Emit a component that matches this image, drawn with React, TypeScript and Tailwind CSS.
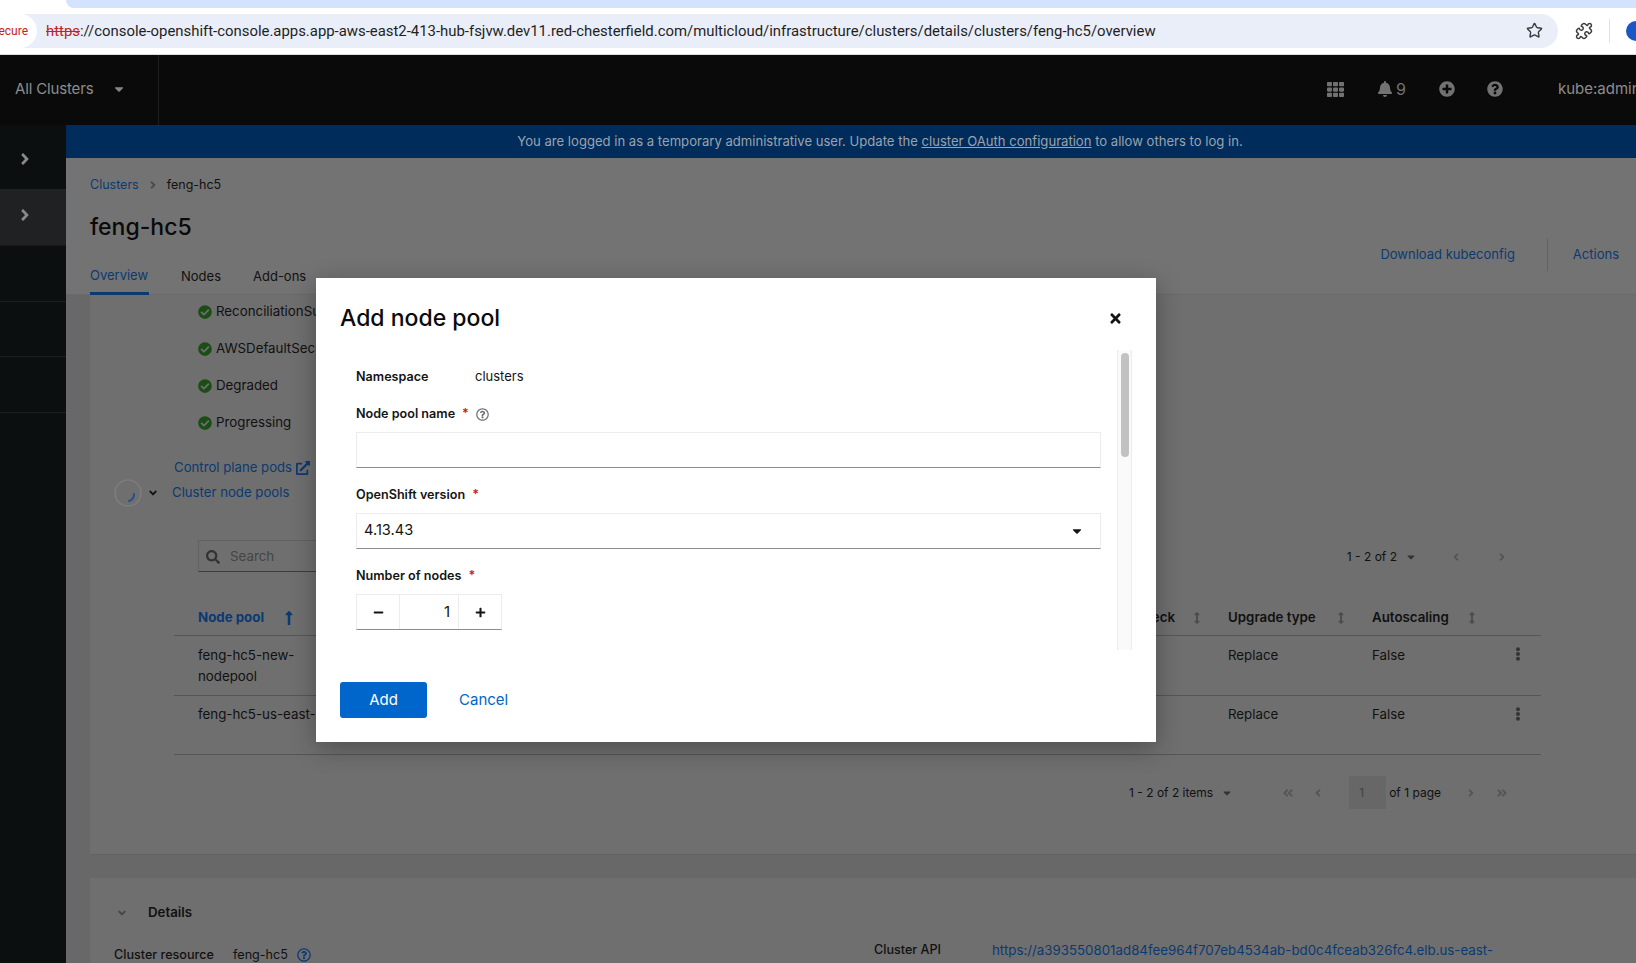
import { Puzzle, Star } from "lucide-react";
import {
  FaAngleDoubleLeft,
  FaAngleDoubleRight,
  FaAngleDown,
  FaAngleLeft,
  FaAngleRight,
  FaArrowsAltV,
  FaBell,
  FaCaretDown,
  FaCheckCircle,
  FaEllipsisV,
  FaExternalLinkAlt,
  FaLongArrowAltUp,
  FaMinus,
  FaPlus,
  FaPlusCircle,
  FaQuestionCircle,
  FaRegQuestionCircle,
  FaSearch,
  FaTh,
  FaTimes,
} from "react-icons/fa";

const url =
  "://console-openshift-console.apps.app-aws-east2-413-hub-fsjvw.dev11.red-chesterfield.com/multicloud/infrastructure/clusters/details/clusters/feng-hc5/overview";

function BrowserBar() {
  return (
    <div className="h-[55px] shrink-0 bg-white border-b border-[#dcdcdc]">
      <div className="h-2 ml-[66px] bg-[#d3e3fd] rounded-bl-xl" />
      <div className="mt-1.5 flex items-center">
        <div className="flex-none w-[1558px] h-[34px] bg-[#eaeef8] rounded-r-full flex items-center overflow-hidden">
          <div className="w-[37px] h-full bg-white rounded-r-full flex items-center justify-end pr-[9px] overflow-hidden text-xs text-[#c5221f] font-['Roboto',sans-serif]">
            ecure
          </div>
          <div className="ml-[9px] flex-1 flex items-center justify-between pr-[15px] font-['Roboto',sans-serif] text-[14.9px] text-[#1f1f1f]">
            <span>
              <span className="line-through text-[#c5221f]">https</span>
              {url}
            </span>
            <Star className="size-[17px] text-[#3c3c3c]" strokeWidth={2} />
          </div>
        </div>
        <Puzzle className="ml-[17px] size-[18px] shrink-0 text-[#3c3c3c]" strokeWidth={2} />
        <div className="ml-[16px] w-px h-6 shrink-0 bg-[#d3e3fd]" />
        <div className="ml-[16px] size-5 shrink-0 rounded-full bg-[#1a56c4]" />
      </div>
    </div>
  );
}

function TopNav() {
  return (
    <div className="h-[70px] shrink-0 bg-[#0a0a0a] flex items-center text-[#8d8d8d] pb-[2px]">
      <div className="w-[159px] h-[70px] -mb-[2px] border-r border-[#1d1d1d] flex items-center pl-[15px] pb-[2px]">
        <span className="text-[15px] tracking-[-0.01em]">All Clusters</span>
        <FaCaretDown className="ml-[19px] size-[14px] text-[#858585]" />
      </div>
      <div className="flex-1 flex items-center justify-end min-w-0">
        <FaTh className="size-[17px] text-[#727272] mr-[33px]" />
        <FaBell className="size-4 text-[#727272]" />
        <span className="ml-[3px] text-base text-[#727272]">9</span>
        <FaPlusCircle className="ml-[33px] size-4 text-[#727272]" />
        <FaQuestionCircle className="ml-8 size-4 text-[#727272]" />
        <span className="ml-[55px] text-[15px] whitespace-nowrap w-[79px] overflow-hidden -mr-px">
          kube:admin
        </span>
      </div>
    </div>
  );
}

function SideRail() {
  return (
    <div className="w-[66px] shrink-0 bg-[#0c0f0f] text-[#8a8a8a]">
      <div className="h-[64px] flex items-center pl-[16px] pt-[3px]">
        <FaAngleRight className="size-[18px]" />
      </div>
      <div className="h-[57px] bg-[#1f2123] flex items-center pl-[16px] pb-[4px] border-b border-[#191b1c]">
        <FaAngleRight className="size-[18px]" />
      </div>
      <div className="h-[56px] border-b border-[#1c1f20]" />
      <div className="h-[55px] border-b border-[#1c1f20]" />
      <div className="h-[56px] border-b border-[#1c1f20]" />
    </div>
  );
}

function PageHead() {
  return (
    <div className="h-[137px] shrink-0 bg-[#737373] border-b border-[#6a6a6a] flex justify-between pl-6 pr-[17px]">
      <div>
        <div className="pt-[17px] flex items-center text-[12.5px] leading-5">
          <span className="text-[#0b3a70]">Clusters</span>
          <FaAngleRight className="mx-[8px] size-3 text-[#4a4a4a]" />
          <span className="text-[#111]">feng-hc5</span>
        </div>
        <h1 className="mt-4 text-[23px] leading-8 font-medium text-[#0a0a0a]">feng-hc5</h1>
        <div className="mt-[15px] flex text-[13px] text-[#111]">
          <span className="h-[37px] w-[59px] flex items-center pt-[2px] border-b-[3px] border-[#0b3a70] text-[#0b3a70] whitespace-nowrap">
            Overview
          </span>
          <span className="ml-8 h-[37px] flex items-center">Nodes</span>
          <span className="ml-8 h-[37px] flex items-center">Add-ons</span>
        </div>
      </div>
      <div className="mt-20 h-[33px] flex items-center text-[13px] text-[#0b3a70]">
        <span>Download kubeconfig</span>
        <div className="ml-8 mr-[25px] w-px h-[33px] bg-[#636363]" />
        <span>Actions</span>
      </div>
    </div>
  );
}

function StatusRow({ label }: { label: string }) {
  return (
    <div className="h-5 flex items-center text-[13.3px] text-[#111]">
      <FaCheckCircle className="size-[14px] text-[#1d4d17]" />
      <span className="ml-[4px] whitespace-nowrap">{label}</span>
    </div>
  );
}

function SortIcon() {
  return <FaArrowsAltV className="size-3 text-[#4c4c4c]" />;
}

function NodePoolTable() {
  return (
    <div className="mt-[26px] ml-[84px] w-[1367px] text-[13.3px] text-[#111]">
      <div className="h-[38px] grid grid-cols-[1054px_144px_1fr] items-center pt-[2px] border-b border-[#555] font-semibold">
        <div className="flex items-center pl-6 pr-[25px]">
          <span className="text-[#0b3a70] font-bold">Node pool</span>
          <FaLongArrowAltUp className="ml-[17px] size-4 text-[#0b3a70]" />
          <span className="ml-auto">Health check</span>
          <span className="ml-4">
            <SortIcon />
          </span>
        </div>
        <div className="flex items-center">
          <span>Upgrade type</span>
          <span className="ml-[19px]">
            <SortIcon />
          </span>
        </div>
        <div className="flex items-center">
          <span>Autoscaling</span>
          <span className="ml-[17px]">
            <SortIcon />
          </span>
        </div>
      </div>
      <div className="h-[60px] grid grid-cols-[1054px_144px_1fr] border-b border-[#555] pt-[9px] leading-[21px]">
        <div className="pl-6 w-[130px] box-content">feng-hc5-new-nodepool</div>
        <div>Replace</div>
        <div className="flex justify-between pr-4">
          <span>False</span>
          <FaEllipsisV className="size-[14px] mt-[2px] text-[#333]" />
        </div>
      </div>
      <div className="h-[59px] grid grid-cols-[1054px_144px_1fr] border-b border-[#555] pt-2 leading-[21px]">
        <div className="pl-6 whitespace-nowrap">feng-hc5-us-east-1a</div>
        <div>Replace</div>
        <div className="flex justify-between pr-4">
          <span>False</span>
          <FaEllipsisV className="size-[14px] mt-[3px] text-[#333]" />
        </div>
      </div>
    </div>
  );
}

function PoolsCard() {
  return (
    <div className="h-[560px] ml-6 bg-[#6f6f6f] border-b border-[#636363]">
      <div className="pt-[7px] pl-[108px] flex flex-col gap-[17px]">
        <StatusRow label="ReconciliationSucceeded" />
        <StatusRow label="AWSDefaultSecurityGroupCreated" />
        <StatusRow label="Degraded" />
        <StatusRow label="Progressing" />
      </div>
      <div className="mt-[25px] pl-[84px] h-5 flex items-center text-[13.2px] text-[#0b3a70]">
        <span>Control plane pods</span>
        <FaExternalLinkAlt className="ml-[4px] size-[14px]" />
      </div>
      <div className="mt-px pl-6 flex items-center text-[13.2px]">
        <svg viewBox="0 0 28 28" className="size-7 shrink-0">
          <circle cx="14" cy="14" r="13" fill="none" stroke="#7d7d7d" strokeWidth="1.5" />
          <path d="M20 15 C20 19 18 21 15 22" fill="none" stroke="#27508a" strokeWidth="2" strokeLinecap="round" />
        </svg>
        <FaAngleDown className="ml-[5px] size-3 text-[#111]" />
        <span className="ml-[13px] text-[#0b3a70]">Cluster node pools</span>
      </div>
      <div className="mt-[33px] ml-[108px] mr-[128px] flex items-center justify-between">
        <div className="w-[200px] h-8 flex items-center border border-[#626262] border-b-[#3c3c3c] pl-[7px] pt-[2px] text-[13.3px] text-[#454545]">
          <FaSearch className="size-[14px] text-[#333]" />
          <span className="ml-[10px]">Search</span>
        </div>
        <div className="flex items-center text-xs pt-[2px] text-[#111]">
          <span>1 - 2 of 2</span>
          <FaCaretDown className="ml-2 size-3 text-[#333]" />
          <FaAngleLeft className="ml-[33px] size-3 text-[#555]" />
          <FaAngleRight className="ml-[34px] size-3 text-[#555]" />
        </div>
      </div>
      <NodePoolTable />
      <div className="mt-[21px] mr-[128px] flex items-center justify-end text-xs text-[#111]">
        <span>1 - 2 of 2 items</span>
        <FaCaretDown className="ml-2 size-3 text-[#333]" />
        <FaAngleDoubleLeft className="ml-[49px] size-3 text-[#555]" />
        <FaAngleLeft className="ml-[18px] size-3 text-[#555]" />
        <div className="ml-[25px] w-[37px] h-[33px] bg-[#676767] flex items-center pl-[10px] text-[#444]">1</div>
        <span className="ml-[3px]">of 1 page</span>
        <FaAngleRight className="ml-[24px] size-3 text-[#555]" />
        <FaAngleDoubleRight className="ml-[19px] size-3 text-[#555]" />
      </div>
    </div>
  );
}

function DetailsCard() {
  return (
    <div className="mt-[23px] ml-6 bg-[#6f6f6f] pt-[25px] pl-6 text-[#111]">
      <div className="h-5 flex items-center text-[13.3px] font-semibold pl-[2px]">
        <FaAngleDown className="size-3 text-[#444]" />
        <span className="ml-[20px]">Details</span>
      </div>
      <div className="mt-[17px] flex text-[12.6px] leading-5">
        <div className="w-[760px] pt-[5px] flex items-start">
          <span className="w-[119px] font-medium">Cluster resource</span>
          <span>feng-hc5</span>
          <FaRegQuestionCircle className="ml-[9px] mt-[3px] size-[14px] text-[#0b3a70]" />
        </div>
        <div className="w-[118px] font-medium">Cluster API address</div>
        <div className="text-[13.3px] text-[#0b3a70] whitespace-nowrap">
          https://a393550801ad84fee964f707eb4534ab-bd0c4fceab326fc4.elb.us-east-
        </div>
      </div>
    </div>
  );
}

function FieldLabel({ text, star }: { text: string; star?: boolean }) {
  return (
    <div className="h-5 flex items-center text-[12.6px] font-semibold text-[#151515]">
      <span>{text}</span>
      {star && <span className="ml-[7px] text-[#c9190b]">*</span>}
    </div>
  );
}

function AddNodePoolModal() {
  return (
    <div className="absolute left-[316px] top-[278px] w-[840px] h-[464px] bg-white shadow-[0_6px_24px_rgba(0,0,0,0.3)] flex flex-col">
      <div className="h-[72px] shrink-0 flex items-center justify-between pl-6 pr-[33px] pt-2">
        <h2 className="text-[23px] font-medium text-[#0a0a0a]">Add node pool</h2>
        <FaTimes className="size-[15px] text-[#151515]" />
      </div>
      <div className="h-[300px] shrink-0 ml-6 mr-6 flex">
        <div className="flex-1 pl-4 pr-4 pt-[17px]">
          <div className="h-5 flex items-center text-[12.6px] text-[#151515]">
            <span className="w-[119px] font-semibold">Namespace</span>
            <span className="text-[13px]">clusters</span>
          </div>
          <div className="mt-[17px] flex items-center">
            <FieldLabel text="Node pool name" star />
            <FaRegQuestionCircle className="ml-[7px] size-[13px] text-[#6a6e73]" />
          </div>
          <div className="mt-[8px] h-9 border border-[#ececec] border-b-[#8a8d90]" />
          <div className="mt-[17px]">
            <FieldLabel text="OpenShift version" star />
          </div>
          <div className="mt-[8px] h-9 border border-[#ececec] border-b-[#8a8d90] flex items-center justify-between pl-[7px] pr-[16px] text-[14.6px] text-[#151515]">
            <span>4.13.43</span>
            <FaCaretDown className="size-[14px]" />
          </div>
          <div className="mt-[17px]">
            <FieldLabel text="Number of nodes" star />
          </div>
          <div className="mt-[8px] w-[146px] h-9 flex border border-[#ececec] border-b-[#8a8d90] text-[#151515]">
            <div className="w-[43px] flex items-center justify-center border-r border-[#ececec]">
              <FaMinus className="size-[11px]" />
            </div>
            <div className="flex-1 flex items-center justify-end pr-2 text-[15px]">1</div>
            <div className="w-[43px] flex items-center justify-center border-l border-[#ececec]">
              <FaPlus className="size-[11px]" />
            </div>
          </div>
        </div>
        <div className="w-[15px] shrink-0 border-x border-[#ececec] bg-[#fafafa] pt-[3px] pl-[3px]">
          <div className="w-2 h-[104px] rounded-full bg-[#c2c2c2]" />
        </div>
      </div>
      <div className="mt-8 ml-6 flex items-center text-[15px]">
        <button className="w-[87px] h-9 rounded-[3px] bg-[#0066cc] text-white">Add</button>
        <span className="ml-8 text-[#0066cc]">Cancel</span>
      </div>
    </div>
  );
}

export default function App() {
  return (
    <div className="relative w-[1636px] h-[963px] overflow-hidden flex flex-col font-['Inter',sans-serif]">
      <BrowserBar />
      <TopNav />
      <div className="flex-1 flex min-h-0">
        <SideRail />
        <div className="flex-1 min-w-0 flex flex-col bg-[#686868]">
          <div className="h-[33px] shrink-0 bg-[#002c5c] flex items-center justify-center pl-[58px] text-[13.1px] text-[#9aa3ad]">
            <span>
              You are logged in as a temporary administrative user. Update the{" "}
              <span className="underline">cluster OAuth configuration</span> to allow others to log in.
            </span>
          </div>
          <PageHead />
          <div className="flex-1 min-h-0 overflow-hidden">
            <PoolsCard />
            <DetailsCard />
          </div>
        </div>
      </div>
      <AddNodePoolModal />
    </div>
  );
}
